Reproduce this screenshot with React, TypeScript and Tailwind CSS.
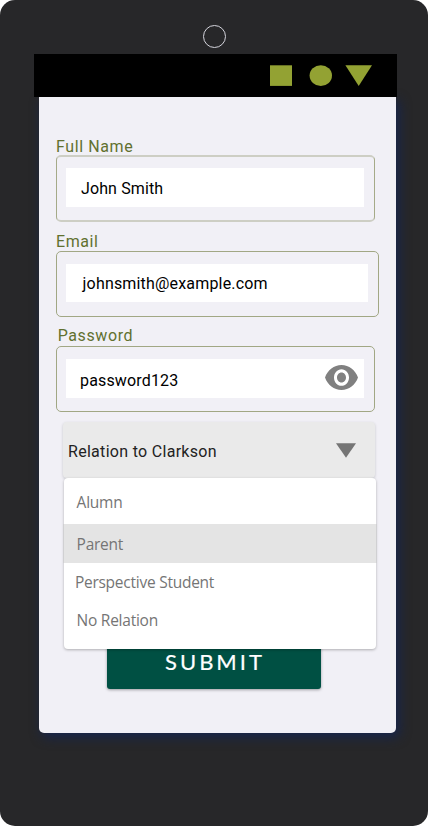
import React from "react";

type FieldProps = {
  label: string;
  value: string;
  labelClass: string;
  boxClass: string;
  inputClass: string;
  valueClass: string;
  children?: React.ReactNode;
};

function Field({ label, value, labelClass, boxClass, inputClass, valueClass, children }: FieldProps) {
  return (
    <div className="flex flex-col items-start">
      <label className={`h-[18px] whitespace-nowrap text-[16px] leading-[18px] font-[385] text-[#61702f] ${labelClass}`}>{label}</label>
      <div className={`rounded-[5px] ${boxClass}`}>
        <div className={`flex items-center justify-between bg-white ${inputClass}`}>
          <span className={`whitespace-nowrap text-[16px] leading-[18px] font-[385] text-black ${valueClass}`}>{value}</span>
          {children}
        </div>
      </div>
    </div>
  );
}

function StatusBar() {
  return (
    <header className="relative z-10 mt-[6px] ml-[34.3px] flex h-[43px] w-[362.7px] items-start bg-black pt-[11.4px] pl-[235.4px]">
      <svg width="103" height="21" viewBox="0 0 103 21">
        <rect x="-0.3" y="0.3" width="22.3" height="20.6" fill="#93a233" />
        <ellipse cx="50.8" cy="10.6" rx="11.2" ry="10.3" fill="#93a233" />
        <path d="M75.4 0.3H102L88.7 20.9Z" fill="#93a233" />
      </svg>
    </header>
  );
}

function EyeIcon() {
  return (
    <svg className="mr-[6px] -mt-[1px]" width="33" height="25" viewBox="1 4.5 22 15" preserveAspectRatio="none">
      <path
        fill="#808080"
        d="M12 4.5C7 4.5 2.73 7.61 1 12c1.73 4.39 6 7.5 11 7.5s9.27-3.11 11-7.5c-1.73-4.39-6-7.5-11-7.5zM12 17c-2.76 0-5-2.24-5-5s2.24-5 5-5 5 2.24 5 5-2.24 5-5 5zm0-8c-1.66 0-3 1.34-3 3s1.34 3 3 3 3-1.34 3-3-1.34-3-3-3z"
      />
    </svg>
  );
}

const option = "whitespace-nowrap text-[15.5px] leading-5 font-[375] tracking-[-0.25px]";

function RelationSelect() {
  return (
    <div className="relative mt-[9.5px] ml-[23.2px] w-[312.5px]">
      <div className="flex h-[56.5px] items-center justify-between rounded-[4px] bg-[#eaeaea] pr-[18.9px] pl-[5.4px] shadow-[0_1px_3px_rgba(0,0,0,0.18)]">
        <span className="mt-[5px] text-[16px] leading-[18px] font-[385] tracking-[0.3px] text-[#222]">Relation to Clarkson</span>
        <svg className="mt-[1px]" width="20" height="15" viewBox="0 0 20 15">
          <path d="M0 0.3H20L10 14.7Z" fill="#757575" />
        </svg>
      </div>
      <div className="absolute top-[56.5px] left-[1px] z-10 flex h-[170.5px] w-[312px] flex-col rounded-[4px] bg-white pt-[46px] font-['Open_Sans','Noto_Sans',sans-serif] text-[#757575] shadow-[0_1px_3px_rgba(0,0,0,0.28)]">
        <div className={`-mt-[32px] h-[32px] pl-[13px] ${option}`}>Alumn</div>
        <div className={`-mx-[1px] h-[39px] border-x border-[#d0d0d2] bg-[#e4e4e4] pt-[10px] pl-[13px] ${option}`}>Parent</div>
        <div className={`h-[38px] pt-[9px] pl-[11.3px] ${option}`}>Perspective Student</div>
        <div className={`h-[38px] pt-[9px] pl-[13px] ${option}`}>No Relation</div>
      </div>
    </div>
  );
}

export default function App() {
  return (
    <div className="h-[826px] w-[428px] overflow-hidden bg-white font-[Roboto,sans-serif]">
      <div className="flex h-[826px] w-[428px] flex-col rounded-[15px] bg-[#272729]">
        <div className="mt-[25px] ml-[203.4px] h-[23px] w-[22.5px] rounded-full border border-[#d4d4dc]" />
        <StatusBar />
        <main className="ml-[39.4px] flex h-[636px] w-[356.4px] flex-col rounded-b-[5px] bg-[#f1f0f6] pt-[40px] shadow-[3px_4px_12px_#16254f]">
          <Field
            label="Full Name"
            value="John Smith"
            labelClass="ml-[16.6px] pt-[1px] tracking-[0.6px]"
            boxClass="ml-[16.6px] h-[67px] w-[319px] border-x border-y-2 border-x-[#a5aa88] border-y-[#cdcec4] px-[9px] pt-[11px]"
            inputClass="h-[39px] w-[298px]"
            valueClass="ml-[15px] mt-[2px] tracking-[0.12px]"
          />
          <div className="mt-[11px]">
            <Field
              label="Email"
              value="johnsmith@example.com"
              labelClass="ml-[16.6px] tracking-[0.6px]"
              boxClass="ml-[16.6px] h-[66px] w-[323px] border border-[#a1a784] px-[9px] pt-[11.5px]"
              inputClass="h-[38.5px] w-[302px]"
              valueClass="ml-[16.6px] mt-[2px] tracking-[0.18px]"
            />
          </div>
          <div className="mt-[10px]">
            <Field
              label="Password"
              value="password123"
              labelClass="ml-[18.3px] mb-[1px] tracking-[0.6px]"
              boxClass="ml-[16.6px] h-[66px] w-[319px] border border-[#a1a784] px-[9px] pt-[12px]"
              inputClass="h-[38.5px] w-[298px]"
              valueClass="ml-[14px] mt-[5px] tracking-[0.16px]"
            >
              <EyeIcon />
            </Field>
          </div>
          <RelationSelect />
          <button className="mt-[157px] ml-[67.2px] flex h-[54px] w-[214.8px] items-center justify-center rounded-[3px] bg-[#005043] pb-[2px] pl-[2px] font-['Lato',sans-serif] text-[22px] tracking-[3px] text-white shadow-[0_1px_3px_rgba(0,0,0,0.35)] [-webkit-text-stroke:0.2px_white]">
            SUBMIT
          </button>
        </main>
      </div>
    </div>
  );
}
